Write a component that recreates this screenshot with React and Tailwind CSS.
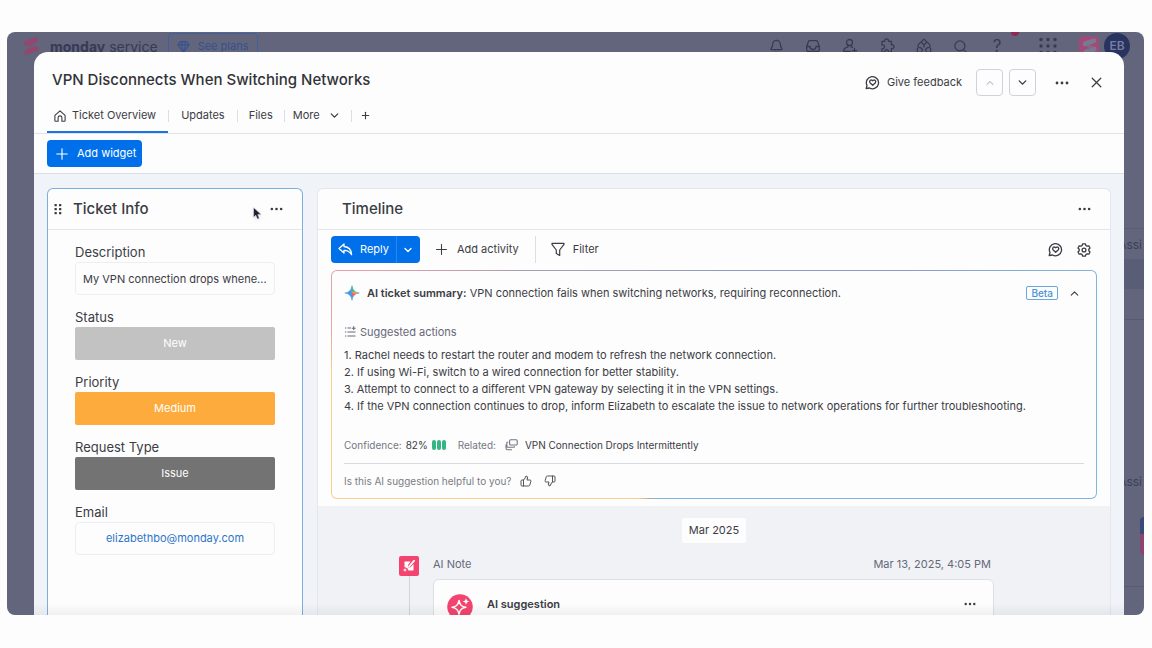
import { Bell, ChevronDown, ChevronUp, Gem, Plus, Search, ThumbsDown, ThumbsUp, X } from 'lucide-react'

const FIELDS = [
  { id: 'status', label: 'Status', value: 'New', color: 'bg-[#c2c2c2]' },
  { id: 'priority', label: 'Priority', value: 'Medium', color: 'bg-[#fdab3d]' },
  { id: 'request-type', label: 'Request Type', value: 'Issue', color: 'bg-[#737373]' },
]

const ACTIONS = [
  'Rachel needs to restart the router and modem to refresh the network connection.',
  'If using Wi-Fi, switch to a wired connection for better stability.',
  'Attempt to connect to a different VPN gateway by selecting it in the VPN settings.',
  'If the VPN connection continues to drop, inform Elizabeth to escalate the issue to network operations for further troubleshooting.',
]

function HomeIcon() {
  return (
    <svg width="12" height="12" viewBox="0 0 12 12" fill="none" stroke="currentColor" strokeWidth="1.1" strokeLinejoin="round">
      <path d="M.9 5.3 6 .8l5.1 4.5v5.1a.8.8 0 0 1-.8.8H7.9V7.8a1.9 1.9 0 0 0-3.8 0v3.4H1.700a.8.8 0 0 1-.8-.8Z" />
    </svg>
  )
}

function FeedbackIcon() {
  return (
    <svg width="15" height="15" viewBox="0 0 15 15" fill="none" stroke="currentColor" strokeWidth="1.3" strokeLinejoin="round" strokeLinecap="round">
      <path d="M1.2 13.5 2 10.4A6.1 6.1 0 1 1 4.5 13Z" />
      <path d="M7.7 10.3 5 7.7a1.600 1.600 0 0 1 2.700-2 1.600 1.600 0 0 1 2.700 2Z" />
    </svg>
  )
}

function GearIcon() {
  return (
    <svg width="14" height="14" viewBox="0 0 14 14" fill="none" stroke="currentColor" strokeWidth="1.3" strokeLinejoin="round">
      <path d="M5.700.8h2.600l.6 1.700 1.100.6 1.800-.3 1.200 2.200L11.800 6.300v1.400l1.200 1.300-1.200 2.200-1.800-.3-1.100.6-.6 1.700H5.700l-.6-1.700-1.100-.6-1.800.3L1 9l1.200-1.300V6.300L1 5l1.200-2.200 1.800.3 1.100-.6Z" />
      <circle cx="7" cy="7" r="1.900" />
    </svg>
  )
}

function MoreDots({ size = 14 }) {
  return (
    <svg width={size} height="4" viewBox="0 0 14 4" fill="currentColor">
      <circle cx="2" cy="2" r="1.4" />
      <circle cx="7" cy="2" r="1.4" />
      <circle cx="12" cy="2" r="1.4" />
    </svg>
  )
}

function DragIcon() {
  return (
    <svg width="8" height="12" viewBox="0 0 8 12" fill="currentColor">
      {[2, 6, 10].map((y) => (
        <g key={y}>
          <rect x=".5" y={y - 1} width="2.300" height="2.300" rx=".6" />
          <rect x="5" y={y - 1} width="2.300" height="2.300" rx=".6" />
        </g>
      ))}
    </svg>
  )
}

function AppsIcon() {
  return (
    <svg width="18" height="18" viewBox="0 0 18 18" fill="currentColor">
      {[2.5, 9, 15.5].map((y) => [2, 9, 16].map((x) => <circle key={`${x}-${y}`} cx={x} cy={y} r="1.7" />))}
    </svg>
  )
}

function InboxIcon() {
  return (
    <svg width="16" height="16" viewBox="0 0 16 16" fill="none" stroke="currentColor" strokeWidth="1.3" strokeLinejoin="round">
      <path d="M1.700 8.500 3.400 3.600a1.500 1.500 0 0 1 1.400-1h6.400a1.500 1.500 0 0 1 1.400 1l1.700 4.900v3.400a1.500 1.500 0 0 1-1.500 1.500H3.200a1.500 1.500 0 0 1-1.500-1.500Z" />
      <path d="M1.700 8.500H5a3 3 0 0 0 6 0h3.300" />
    </svg>
  )
}

function InviteIcon() {
  return (
    <svg width="16" height="16" viewBox="0 0 16 16" fill="none" stroke="currentColor" strokeWidth="1.3" strokeLinecap="round" strokeLinejoin="round">
      <circle cx="7.5" cy="4.5" r="3" />
      <path d="M6 7.300v1.500C3.300 9.400 1.700 11 1.400 13.400h6.800M9 7.300v1.500l1.500.6M12.500 10.500v4.400M10.300 12.700h4.400" />
    </svg>
  )
}

function PuzzleIcon() {
  return (
    <svg width="16" height="16" viewBox="0 0 16 16" fill="none" stroke="currentColor" strokeWidth="1.3" strokeLinejoin="round">
      <path d="M3 2.700h2.800a1.900 1.900 0 1 1 3.600 0h3v3.600a1.900 1.900 0 1 1 0 3.500v3.700H9.300a1.800 1.800 0 1 0-3.400 0H3V10a1.900 1.900 0 1 0 0-3.600Z" transform="translate(0 .6)" />
    </svg>
  )
}

function AutopilotIcon() {
  return (
    <svg width="16" height="16" viewBox="0 0 16 16" fill="none" stroke="currentColor" strokeWidth="1.2" strokeLinejoin="round">
      <path d="M8 1.200 10.800 4 8 6.800 5.200 4Z" />
      <path d="M5.200 4.300C3.200 5 2 6.600 1.800 9M10.800 4.300c2 .7 3.200 2.300 3.400 4.700M8 7v2.500" />
      <path d="M1.300 10.300 4 9.300l2.700 2.400-1.400 2.600H1.300ZM14.700 10.300 12 9.300l-2.700 2.400 1.400 2.600h4Z" />
    </svg>
  )
}

function ServiceLogo({ size = 18 }) {
  return (
    <svg width={size} height={size} viewBox="0 0 18 18" fill="currentColor">
      <path d="M3.8 3.5 13.500.4c1.500-.4 2.500.8 2.500 2.200 0 1.500-.7 2.400-2 2.900L5 8.600C3 9 2 8 2 6.500c0-1.500.6-2.500 1.800-3Z" />
      <path d="M4.500 12.500 14 9.400c1.500-.4 2.400.7 2.400 2.100 0 1.600-.7 2.400-1.900 2.900l-9.500 3.200c-1.700.5-2.600-.7-2.600-2.200 0-1.500.7-2.400 2.100-2.900Z" />
      <path d="M9 6.500 15 10l-3.500 2.500L4 8.200Z" opacity=".55" />
    </svg>
  )
}

function SparkIcon() {
  return (
    <svg width="16" height="16" viewBox="0 0 16 16">
      <path d="M8 .8C8.700 5.300 10.700 7.300 15.200 8 10.700 8.700 8.700 10.700 8 15.200 7.300 10.700 5.300 8.700.8 8 5.300 7.300 7.300 5.300 8 .8Z" fill="#4c96e6" stroke="#4c96e6" strokeWidth=".6" />
      <path d="M8 .8C8.700 4.700 9.700 6 11.500 7L8 8.300 6.900 5.600C7.500 4.500 7.800 3 8 .8Z" fill="#3fbf8f" />
      <path d="M15.200 8C11.800 8.500 10 9.600 9 11.500L7.700 8l2.300-1.700C11.200 7.300 13 7.700 15.200 8Z" fill="#f9a03f" />
      <path d="M7.700 8l4.300.7c-1.800.7-2.700 1.700-3.300 3.300Z" fill="#ee5c73" />
    </svg>
  )
}

function SuggestIcon() {
  return (
    <svg width="12" height="12" viewBox="0 0 12 12" fill="none" stroke="currentColor" strokeWidth="1.1">
      <path d="M1 2h1.300M3.500 2H7M1 6h1.300M3.500 6h8M1 10h1.300M3.500 10h8M9.700.3v3.800M7.800 2.200h3.800" />
    </svg>
  )
}

function ReplyIcon() {
  return (
    <svg width="15" height="13" viewBox="0 0 15 13" fill="none" stroke="currentColor" strokeWidth="1.3" strokeLinejoin="round">
      <path d="M6 1 1 5.500 6 10V7.400c3.500-.2 5.700 1.300 7.600 4.300C13.400 7 11 3.900 6 3.500Z" />
    </svg>
  )
}

function FunnelIcon() {
  return (
    <svg width="14" height="15" viewBox="0 0 14 15" fill="none" stroke="currentColor" strokeWidth="1.2" strokeLinejoin="round">
      <path d="M1 1.300h12v1L8.700 8v5.400L5.300 11.500V8L1 2.300Z" />
    </svg>
  )
}

function RelatedIcon() {
  return (
    <svg width="13" height="12" viewBox="0 0 13 12" fill="none" stroke="currentColor" strokeWidth="1.1" strokeLinejoin="round">
      <rect x="4.600" y=".8" width="7.600" height="5.200" rx="1" />
      <path d="M3.200 3h-.4a1 1 0 0 0-1 1v3.200a1 1 0 0 0 1 1H8.600a1 1 0 0 0 1-1M1 5.600V9.200a1.600 1.600 0 0 0 1.600 1.600H7" />
    </svg>
  )
}

function NoteIcon() {
  return (
    <svg width="14" height="14" viewBox="0 0 14 14">
      <path d="M2.500 2.500h6L6 6v2.500l2.500-.3L11.500 5v6.500h-5L5.700 9.500 2.500 8Z" fill="#fff" />
      <path d="M7 7.500 12 1.800" stroke="#fff" strokeWidth="1.8" strokeLinecap="round" />
      <path d="M3 8.500 3.700 10.300 5.500 11l-1.800.7L3 13.500l-.7-1.800L.5 11l1.800-.7Z" fill="#fff" stroke="#f3446f" strokeWidth=".4" />
    </svg>
  )
}

function SuggestionAvatar() {
  return (
    <svg width="26" height="26" viewBox="0 0 26 26" className="shrink-0">
      <circle cx="13" cy="13" r="12.8" fill="#f3446f" />
      <path
        d="M12 6.500c.8 4.300 2.300 5.900 6.800 6.800-4.500.9-6 2.500-6.800 6.900-.8-4.400-2.400-6-6.900-6.900 4.500-.9 6.100-2.500 6.900-6.800Z"
        fill="none"
        stroke="#fff"
        strokeWidth="1.500"
        strokeLinejoin="round"
      />
      <path d="m19 4.300.9 2.300 2.300.9-2.300.9L19 10.700l-.9-2.300-2.300-.9 2.300-.9Z" fill="#fff" />
    </svg>
  )
}

function Cursor() {
  return (
    <svg width="9" height="13" viewBox="0 0 9 13" className="absolute right-[40px] top-[18px] drop-shadow">
      <path d="M.6.6v9.600l2.200-2 1.600 3.900 1.900-.8-1.600-3.700h3.500Z" fill="#1d2030" stroke="#fff" strokeWidth=".4" />
    </svg>
  )
}

function TopBar() {
  return (
    <header className="flex h-7 items-center pl-[15px] pr-[14px] text-[#373a55]">
      <span className="text-[#93476f]">
        <ServiceLogo />
      </span>
      <p className="ml-[10px] whitespace-nowrap text-[14px]">
        <b className="font-bold">monday</b> service
      </p>
      <a href="#plans" className="ml-[10px] flex h-[26px] items-center gap-2 whitespace-nowrap rounded-sm border border-[#40609f] px-2 text-[11px] text-[#34528f]">
        <Gem size={13} />
        See plans
      </a>
      <nav aria-label="Main" className="ml-auto flex items-center gap-[21px]">
        <button aria-label="Notifications"><Bell size={15} strokeWidth={2} /></button>
        <button aria-label="Inbox"><InboxIcon /></button>
        <button aria-label="Invite"><InviteIcon /></button>
        <button aria-label="Apps"><PuzzleIcon /></button>
        <button aria-label="Automations"><AutopilotIcon /></button>
        <button aria-label="Search"><Search size={15} strokeWidth={2} /></button>
        <button className="relative w-4 text-[17px] leading-4">
          ?
          <span className="absolute -top-[10px] left-[22px] size-2 rounded-full bg-[#8f2b50]" />
        </button>
      </nav>
      <button aria-label="Products" className="ml-[34px]"><AppsIcon /></button>
      <span className="ml-[22px] grid size-5 place-items-center rounded-sm bg-[#a14a78] text-[#777a91]">
        <ServiceLogo size={17} />
      </span>
      <span className="ml-[5px] grid size-[26px] place-items-center rounded-full bg-[#283360] text-[12px] font-semibold text-[#777e9f]">EB</span>
    </header>
  )
}

function BackgroundBoard() {
  return (
    <div aria-hidden="true" className="ml-auto flex w-[22px] flex-col text-[12px] leading-4 text-[#3c405b]">
      <div className="mt-[168px] flex justify-end border-t border-[#585c75] pt-2 pr-[2px]">Assi</div>
      <div className="mt-[6px] h-[30px] bg-[#595d76]" />
      <div className="mt-[30px] border-t border-[#565a73]" />
      <div className="mt-[154px] flex justify-end pr-[2px]">Assi</div>
      <div className="ml-auto mt-[27px] h-[17px] w-1 rounded-tl bg-[#3c4878]" />
      <div className="ml-auto h-[21px] w-1 rounded-bl bg-[#8b4470]" />
      <div className="mt-[31px] border-t border-[#565a73]" />
    </div>
  )
}

function ModalHeader() {
  return (
    <header className="border-b border-[#e1e3ea]">
      <div className="mt-[17px] flex h-[27px] items-center pl-[18px] pr-[19px]">
        <h1 className="mb-1 text-[15px] font-medium text-[#323338]">VPN Disconnects When Switching Networks</h1>
        <button className="ml-auto flex items-center gap-[7px] text-[11px]">
          <FeedbackIcon />
          Give feedback
        </button>
        <button aria-label="Previous ticket" disabled className="ml-[14px] grid size-[27px] place-items-center rounded border border-[#d0d2db] text-[#a3a5ae]">
          <ChevronUp size={12} />
        </button>
        <button aria-label="Next ticket" className="ml-[6px] grid size-[27px] place-items-center rounded border border-[#d0d2db]">
          <ChevronDown size={13} strokeWidth={2.6} />
        </button>
        <button aria-label="Ticket menu" className="ml-[18px]"><MoreDots size={16} /></button>
        <button aria-label="Close" className="ml-[18px]"><X size={17} strokeWidth={1.8} /></button>
      </div>
      <nav aria-label="Ticket views" className="ml-[13px] mt-1 flex h-[33px] text-[11px]">
        <button className="flex items-center gap-[6px] border-b-2 border-[#1a73e0] pl-[7px] pr-3">
          <HomeIcon />
          Ticket Overview
        </button>
        <div className="mb-[2px] flex items-center">
          <span className="h-3 w-px bg-[#dcdee6]" />
          <button className="px-3">Updates</button>
          <span className="h-3 w-px bg-[#dcdee6]" />
          <button className="px-[11px]">Files</button>
          <span className="h-3 w-px bg-[#dcdee6]" />
          <button className="flex items-center gap-2 pl-2 pr-[10px]">
            More
            <ChevronDown size={13} strokeWidth={2.4} />
          </button>
          <span className="h-3 w-px bg-[#dcdee6]" />
          <button aria-label="Add view" className="px-2"><Plus size={11} strokeWidth={2.4} /></button>
        </div>
      </nav>
    </header>
  )
}

function TicketInfo() {
  return (
    <section className="relative w-64 shrink-0 rounded-t-md border border-b-0 border-[#79b0e0] bg-[#fdfdfd]">
      <header className="flex h-[41px] items-center border-b border-[#e4e6ee] pl-[6px] pr-[19px]">
        <DragIcon />
        <h2 className="ml-[11px] text-[15px] font-medium">Ticket Info</h2>
        <button aria-label="Ticket Info menu" className="ml-auto"><MoreDots size={13} /></button>
      </header>
      <Cursor />
      <div className="flex flex-col gap-3 px-[27px] pt-3">
        <div>
          <label htmlFor="description" className="block h-5 text-[13px] leading-5">Description</label>
          <input
            id="description"
            defaultValue="My VPN connection drops whene..."
            className="block h-[33px] w-full rounded border border-[#eceef2] bg-transparent px-[7px] text-[11px] outline-none"
          />
        </div>
        {FIELDS.map((f) => (
          <div key={f.id}>
            <label htmlFor={f.id} className="block h-5 text-[13px] leading-5">{f.label}</label>
            <button id={f.id} className={`block h-[33px] w-full rounded-xs text-[11px] text-white ${f.color}`}>{f.value}</button>
          </div>
        ))}
        <div>
          <p className="h-5 text-[13px] leading-5">Email</p>
          <div className="grid h-[33px] place-items-center rounded border border-[#eceef2] text-[11px]">
            <a href="mailto:elizabethbo@monday.com" className="text-[#2b76c9]">elizabethbo@monday.com</a>
          </div>
        </div>
      </div>
    </section>
  )
}

function TimelineToolbar() {
  return (
    <div className="flex h-[27px] items-center text-[11px]">
      <div className="flex h-full rounded bg-[#0070ea] text-white">
        <button className="flex items-center gap-[7px] pl-[7px] pr-[7px]">
          <ReplyIcon />
          Reply
        </button>
        <button aria-label="Reply options" className="grid w-6 place-items-center border-l border-[#2a86ec]"><ChevronDown size={12} strokeWidth={2.6} /></button>
      </div>
      <button className="ml-[13px] flex items-center gap-[7px]">
        <Plus size={17} strokeWidth={1.5} />
        Add activity
      </button>
      <span className="ml-4 h-full w-px bg-[#dcdee6]" />
      <button className="ml-[15px] flex items-center gap-2">
        <FunnelIcon />
        Filter
      </button>
      <button aria-label="Timeline feedback" className="ml-auto"><FeedbackIcon /></button>
      <button aria-label="Timeline settings" className="ml-[14px] mr-[6px]"><GearIcon /></button>
    </div>
  )
}

function AiSummary() {
  return (
    <section className="mt-[7px] rounded-md bg-[conic-gradient(#8f9bc0_0deg,#8f9bc4_60deg,#7fb6e0_75deg,#7fb8e0_205deg,#a9a9ae_209deg,#f9cf8e_214deg,#f9cf8e_272deg,#eda3a9_278deg,#e3a0aa_288deg,#a79fae_300deg,#8f9bc0_360deg)] p-px">
      <div className="rounded-[5px] bg-[#fdfdfd] px-3 pb-[9px] pt-[14px]">
        <div className="flex h-4 items-center">
          <SparkIcon />
          <h3 className="ml-[7px] text-[11px]">
            <b className="font-semibold">AI ticket summary:</b> VPN connection fails when switching networks, requiring reconnection.
          </h3>
          <span className="ml-auto rounded-xs border border-[#69a7dd] px-1 text-[10px] font-medium leading-3 text-[#4893d6]">Beta</span>
          <button aria-label="Collapse summary" className="ml-[10px] mr-[3px]"><ChevronUp size={13} /></button>
        </div>
        <h4 className="mt-[23px] flex h-4 items-center gap-1 text-[11px] text-[#676879]">
          <SuggestIcon />
          Suggested actions
        </h4>
        <ol className="mt-[7px] text-[11px] leading-[17px]">
          {ACTIONS.map((action, i) => (
            <li key={action}>{i + 1}. {action}</li>
          ))}
        </ol>
        <div className="mt-[22px] flex h-4 items-center text-[10px]">
          <span className="text-[#76777f]">Confidence:</span>
          <span className="ml-1">82%</span>
          <span className="ml-1 flex gap-px">
            <i className="h-[10px] w-1 rounded-xs bg-[#33b584]" />
            <i className="h-[10px] w-1 rounded-xs bg-[#33b584]" />
            <i className="h-[10px] w-1 rounded-xs bg-[#33b584]" />
          </span>
          <span className="ml-3 text-[#76777f]">Related:</span>
          <span className="ml-[9px] text-[#76777f]"><RelatedIcon /></span>
          <a href="#related" className="ml-[7px]">VPN Connection Drops Intermittently</a>
        </div>
        <div className="mt-[10px] flex items-center border-t border-[#d8dae2] pt-[9px] text-[10px] leading-4 text-[#7b7c84]">
          Is this AI suggestion helpful to you?
          <button aria-label="Helpful" className="ml-[9px] text-[#55565f]"><ThumbsUp size={12} /></button>
          <button aria-label="Not helpful" className="ml-3 text-[#55565f]"><ThumbsDown size={12} /></button>
        </div>
      </div>
    </section>
  )
}

function Timeline() {
  return (
    <section className="flex min-w-0 flex-1 flex-col rounded-t-md border border-b-0 border-[#e4e6ee] bg-[#fdfdfd]">
      <header className="flex h-[41px] shrink-0 items-center border-b border-[#e4e6ee] pl-6 pr-[19px]">
        <h2 className="text-[15px] font-medium">Timeline</h2>
        <button aria-label="Timeline menu" className="ml-auto"><MoreDots size={13} /></button>
      </header>
      <div className="px-[13px] pb-[7px] pt-[6px]">
        <TimelineToolbar />
        <AiSummary />
      </div>
      <div className="flex-1 bg-[#f0f2f6] pt-3">
        <p className="mx-auto w-fit rounded-xs bg-[#fdfdfd] px-[7px] text-[11px] leading-[25px]">Mar 2025</p>
        <div className="mt-[13px] grid grid-cols-[20px_1fr] gap-x-[14px] pl-[81px] pr-[116px]">
          <div className="flex flex-col items-center">
            <span className="grid size-5 shrink-0 place-items-center rounded-xs bg-[#f3446f]"><NoteIcon /></span>
            <span className="w-px flex-1 bg-[#d0d3dd]" />
          </div>
          <div>
            <div className="flex h-[23px] justify-between text-[11px] leading-4 text-[#676879]">
              <span>AI Note</span>
              <time className="mr-[3px]">Mar 13, 2025, 4:05 PM</time>
            </div>
            <article className="flex h-24 items-start rounded-md border border-[#dddfe7] bg-[#fdfdfd] pl-[13px] pr-[17px] pt-[14px]">
              <SuggestionAvatar />
              <h3 className="ml-[14px] text-[11px] font-semibold leading-5">AI suggestion</h3>
              <button aria-label="Suggestion menu" className="ml-auto flex h-5 items-center"><MoreDots size={12} /></button>
            </article>
          </div>
        </div>
      </div>
    </section>
  )
}

export default function App() {
  return (
    <div className="h-screen bg-[#fdfdfd] pb-[33px] pl-[7px] pr-2 pt-8 font-[Inter,'Liberation_Sans',sans-serif] text-[#3b3c44]">
      <div className="relative h-full overflow-hidden rounded-lg bg-[#62657b]">
        <TopBar />
        <BackgroundBoard />
        <main className="absolute bottom-0 left-[27px] right-5 top-5 flex flex-col overflow-hidden rounded-t-[14px] bg-[#fdfdfd]">
          <ModalHeader />
          <div className="border-b border-[#dcdfe7] px-[13px] py-[6px]">
            <button className="flex h-[27px] items-center gap-[6px] rounded bg-[#0070ea] px-[6px] text-[11px] text-white">
              <Plus size={18} strokeWidth={1.5} />
              Add widget
            </button>
          </div>
          <div className="flex min-h-0 flex-1 gap-[14px] overflow-hidden bg-[#f0f3f8] px-[13px] pt-[14px]">
            <TicketInfo />
            <Timeline />
          </div>
          <div className="pointer-events-none absolute inset-x-0 bottom-0 h-3 bg-linear-to-b from-transparent to-black/5" />
        </main>
      </div>
    </div>
  )
}
